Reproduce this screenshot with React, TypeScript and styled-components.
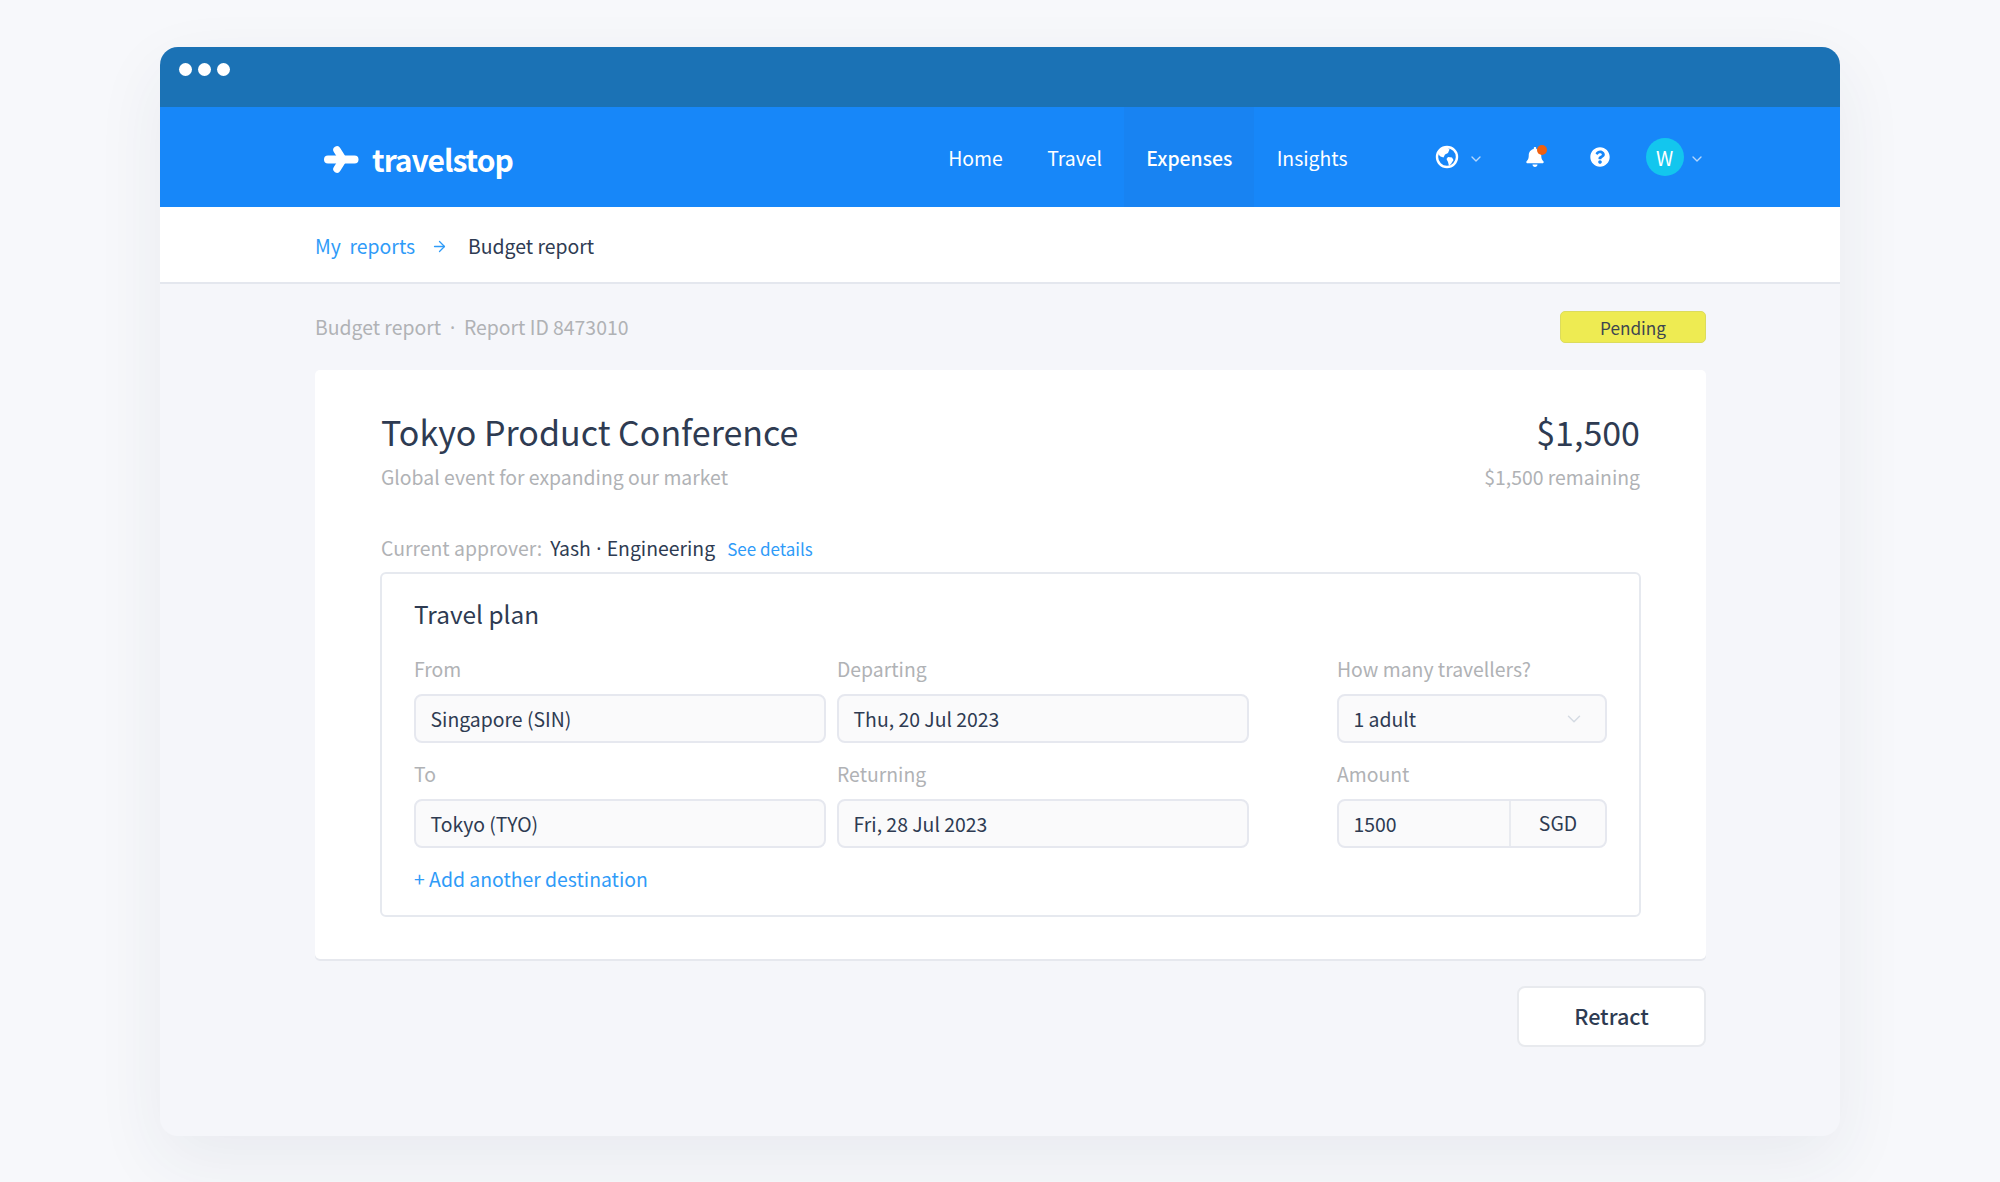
import React from 'react';
import styled, { createGlobalStyle } from 'styled-components';
import { ArrowRight, ChevronDown } from 'lucide-react';
import { FaBell, FaQuestionCircle } from 'react-icons/fa';

const GlobalStyle = createGlobalStyle`
  html, body {
    margin: 0;
    background: #f7f8fb;
  }
  body {
    font-family: 'Noto Sans CJK SC', 'Noto Sans', sans-serif;
    color: #2e3b52;
  }
  * {
    box-sizing: border-box;
  }
`;

const navItems = ['Home', 'Travel', 'Expenses', 'Insights'];

const App: React.FC = () => (
  <Page>
    <GlobalStyle />
    <Window>
      <TitleBar>
        <Dot />
        <Dot />
        <Dot />
      </TitleBar>
      <Nav>
        <Logo>
          <svg width="36" height="29" viewBox="0 0 36 29" fill="none" stroke="#fff" strokeLinecap="round">
            <path d="M5 14.5H31.5" strokeWidth="8" />
            <path d="M14 5L20 14.5L14 24" strokeWidth="7.5" strokeLinejoin="round" />
          </svg>
          <LogoText>travelstop</LogoText>
        </Logo>
        <NavLinks>
          {navItems.map((item) => (
            <NavLink key={item} $active={item === 'Expenses'}>
              {item}
            </NavLink>
          ))}
        </NavLinks>
        <NavTools>
          <GlobeGroup>
            <svg width="24" height="24" viewBox="0 0 24 24">
              <circle cx="12" cy="12" r="10" fill="none" stroke="#fff" strokeWidth="2.4" />
              <path
                d="M9 2.5C6 3.5 4 6 3 9L5.5 11.5L8.5 12.5L10 9.5L13 8L14.5 4.5L12.5 2.5Z"
                fill="#fff"
              />
              <path d="M13 12L17 12.5L18.5 15L16 19L14 21L13 17L11.5 14Z" fill="#fff" />
            </svg>
            <Caret size={16} strokeWidth={2} />
          </GlobeGroup>
          <BellWrap>
            <FaBell size={20} color="#fff" />
            <BellDot />
          </BellWrap>
          <HelpIcon size={20} color="#fff" />
          <Avatar>W</Avatar>
          <Caret size={16} strokeWidth={2} />
        </NavTools>
      </Nav>
      <Breadcrumb>
        <CrumbLink>My&nbsp; reports</CrumbLink>
        <CrumbArrow size={17} strokeWidth={1.8} />
        <CrumbCurrent>Budget report</CrumbCurrent>
      </Breadcrumb>
      <Content>
        <MetaRow>
          <MetaText>
            Budget report <MiddleDot $gap={4.5}>·</MiddleDot> Report ID 8473010
          </MetaText>
          <Badge>Pending</Badge>
        </MetaRow>
        <Card>
          <CardHeader>
            <div>
              <Title>Tokyo Product Conference</Title>
              <Subtitle>Global event for expanding our market</Subtitle>
            </div>
            <Totals>
              <Title>$1,500</Title>
              <Subtitle>$1,500 remaining</Subtitle>
            </Totals>
          </CardHeader>
          <ApproverRow>
            <Muted>Current approver:</Muted>
            <Approver>
              Yash <MiddleDot $gap={1}>·</MiddleDot> Engineering
            </Approver>
            <DetailsLink>See details</DetailsLink>
          </ApproverRow>
          <Panel>
            <PanelTitle>Travel plan</PanelTitle>
            <FieldGrid>
              <Field>
                <FieldLabel>From</FieldLabel>
                <InputBox>Singapore (SIN)</InputBox>
              </Field>
              <Field>
                <FieldLabel>Departing</FieldLabel>
                <InputBox>Thu, 20 Jul 2023</InputBox>
              </Field>
              <Field $offset>
                <FieldLabel>How many travellers?</FieldLabel>
                <InputBox>
                  1 adult
                  <SelectCaret size={22} strokeWidth={1.6} />
                </InputBox>
              </Field>
              <Field>
                <FieldLabel>To</FieldLabel>
                <InputBox>Tokyo (TYO)</InputBox>
              </Field>
              <Field>
                <FieldLabel>Returning</FieldLabel>
                <InputBox>Fri, 28 Jul 2023</InputBox>
              </Field>
              <Field $offset>
                <FieldLabel>Amount</FieldLabel>
                <InputBox>
                  1500
                  <Currency>SGD</Currency>
                </InputBox>
              </Field>
            </FieldGrid>
            <AddLink>+ Add another destination</AddLink>
          </Panel>
        </Card>
        <Actions>
          <RetractButton>Retract</RetractButton>
        </Actions>
      </Content>
    </Window>
  </Page>
);

export default App;

const Page = styled.div`
  height: 1182px;
  padding: 47px 160px 0;
  overflow: hidden;
`;

const Window = styled.div`
  height: 1089px;
  border-radius: 18px;
  overflow: hidden;
  background: #f5f6fa;
  box-shadow: 0 24px 70px rgba(40, 50, 90, 0.07);
`;

const TitleBar = styled.div`
  display: flex;
  gap: 6px;
  height: 60px;
  padding: 16px 19px;
  background: #1b72b5;
`;

const Dot = styled.span`
  width: 13px;
  height: 13px;
  border-radius: 50%;
  background: #fff;
`;

const Nav = styled.nav`
  display: flex;
  align-items: stretch;
  height: 100px;
  padding-left: 163px;
  background: #1787f9;
  color: #fff;
`;

const Logo = styled.div`
  display: flex;
  align-items: center;
  gap: 13px;
  width: 603px;
  padding-top: 4px;
`;

const LogoText = styled.span`
  font-size: 30px;
  font-weight: 700;
  letter-spacing: -1px;
`;

const NavLinks = styled.div`
  display: flex;
`;

const NavLink = styled.div<{ $active?: boolean }>`
  display: flex;
  align-items: center;
  padding: 0 22.2px;
  font-size: 19.4px;
  font-weight: ${(props) => (props.$active ? 500 : 400)};
  background: ${(props) => (props.$active ? '#1883f2' : 'transparent')};
`;

const NavTools = styled.div`
  display: flex;
  align-items: center;
  margin-left: 65px;
`;

const GlobeGroup = styled.div`
  display: flex;
  align-items: center;
  justify-content: space-between;
  width: 49px;
`;

const Caret = styled(ChevronDown)`
  margin-top: 3px;
  color: #b5d6fb;
`;

const BellWrap = styled.div`
  position: relative;
  display: flex;
  margin-left: 41px;
`;

const BellDot = styled.span`
  position: absolute;
  top: -2px;
  right: -2px;
  width: 10px;
  height: 10px;
  border-radius: 50%;
  background: #f0600f;
`;

const HelpIcon = styled(FaQuestionCircle)`
  margin-left: 45px;
`;

const Avatar = styled.div`
  display: flex;
  align-items: center;
  justify-content: center;
  width: 38px;
  height: 38px;
  margin: 0 5px 0 36px;
  border-radius: 50%;
  background: #13c6ee;
  font-size: 19.6px;
  font-weight: 400;
`;

const Breadcrumb = styled.div`
  display: flex;
  align-items: center;
  gap: 16px;
  height: 77px;
  padding: 1px 0 0 155px;
  background: #fff;
  border-bottom: 2px solid #e4e7ee;
  font-size: 19.4px;
`;

const CrumbLink = styled.span`
  color: #2f9bf8;
`;

const CrumbArrow = styled(ArrowRight)`
  margin-top: 3px;
  color: #2f9bf8;
`;

const CrumbCurrent = styled.span`
  margin-left: 4px;
  color: #2e3b52;
`;

const Content = styled.div`
  padding: 0 134px 0 155px;
`;

const MetaRow = styled.div`
  display: flex;
  align-items: center;
  justify-content: space-between;
  padding: 27px 0;
`;

const MetaText = styled.span`
  margin-bottom: 2px;
  font-size: 19.4px;
  color: #b0b2b5;
`;

const MiddleDot = styled.span<{ $gap?: number }>`
  margin: 0 ${(props) => props.$gap ?? 0}px;
  font-family: 'Noto Sans', sans-serif;
`;

const Badge = styled.div`
  display: flex;
  align-items: center;
  justify-content: center;
  width: 146px;
  height: 32px;
  border: 1px solid #dcdc5c;
  border-radius: 5px;
  background: #eeeb52;
  font-size: 17.2px;
  color: #3d4550;
`;

const Card = styled.section`
  height: 589px;
  padding: 40px 65px 0;
  border-radius: 5px;
  background: #fff;
  box-shadow: 0 2px 0 #e6e8ee;
`;

const CardHeader = styled.div`
  display: flex;
  justify-content: space-between;
  padding: 0 1px;
`;

const Totals = styled.div`
  text-align: right;
`;

const Title = styled.h1`
  margin: 0 0 8px;
  font-size: 34px;
  line-height: 44px;
  font-weight: 400;
  color: #2e3b52;
`;

const Subtitle = styled.div`
  font-size: 19.4px;
  line-height: 30px;
  color: #b0b2b5;
`;

const ApproverRow = styled.div`
  display: flex;
  align-items: baseline;
  height: 30px;
  margin-top: 41px;
  padding-left: 1px;
  line-height: 30px;
  font-size: 19.4px;
`;

const Muted = styled.span`
  color: #b0b2b5;
`;

const Approver = styled.span`
  margin-left: 8px;
  color: #2e3b52;
`;

const DetailsLink = styled.span`
  margin-left: 12px;
  font-size: 17px;
  color: #2f9bf8;
`;

const Panel = styled.div`
  height: 345px;
  margin-top: 9px;
  padding: 23px 32px 0;
  border: 2px solid #e6e9ef;
  border-radius: 6px;
`;

const PanelTitle = styled.h2`
  margin: 0 0 24px;
  font-size: 24.4px;
  line-height: 34px;
  font-weight: 400;
  color: #2e3b52;
`;

const FieldGrid = styled.div`
  display: grid;
  grid-template-columns: 412px 412px 347px;
  column-gap: 11px;
  row-gap: 17px;
`;

const Field = styled.div<{ $offset?: boolean }>`
  padding-left: ${(props) => (props.$offset ? '77px' : '0')};
`;

const FieldLabel = styled.div`
  margin-bottom: 11px;
  font-size: 19.4px;
  line-height: 28px;
  color: #b0b2b5;
`;

const InputBox = styled.div`
  position: relative;
  display: flex;
  align-items: center;
  height: 49px;
  padding: 0 14.5px;
  border: 2px solid #e6e8ef;
  border-radius: 8px;
  background: #fafafb;
  font-size: 19.4px;
  color: #2e3b52;
`;

const SelectCaret = styled(ChevronDown)`
  position: absolute;
  right: 20px;
  color: #d5dbe3;
`;

const Currency = styled.span`
  position: absolute;
  top: 0;
  right: 0;
  bottom: 0;
  display: flex;
  align-items: center;
  justify-content: center;
  width: 96px;
  padding-bottom: 2px;
  border-left: 2px solid #e9ebf0;
`;

const AddLink = styled.div`
  margin-top: 16px;
  font-size: 19.4px;
  line-height: 30px;
  color: #2f9bf8;
`;

const Actions = styled.div`
  display: flex;
  justify-content: flex-end;
  margin-top: 27px;
`;

const RetractButton = styled.button`
  width: 189px;
  height: 61px;
  padding: 0 0 2px;
  border: 2px solid #e8eaee;
  border-radius: 8px;
  background: #fff;
  font-family: inherit;
  font-size: 21.6px;
  font-weight: 500;
  color: #2e3b52;
`;
